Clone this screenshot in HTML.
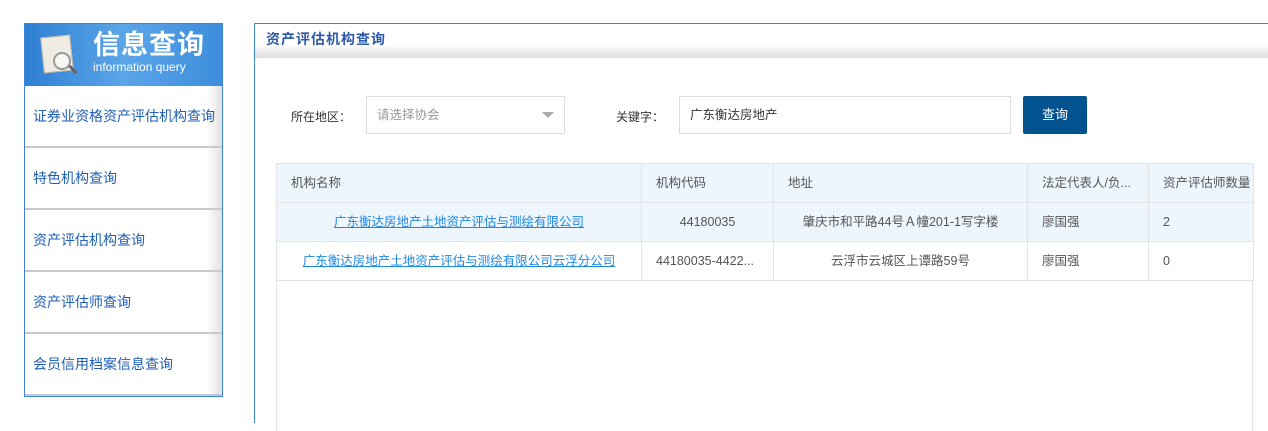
<!DOCTYPE html>
<html><head><meta charset="utf-8"><style>
*{margin:0;padding:0;box-sizing:border-box}
body{width:1268px;height:418px;overflow:hidden;background:#fff;font-family:"Liberation Sans","Noto Sans CJK SC",sans-serif;font-size:13px;position:relative}
.side{position:absolute;left:24px;top:23px;width:199px;height:374px;border:1px solid #3c87d5;}
.hd{height:62px;background:linear-gradient(90deg,#2f7fd3,#5ba5e8 50%,#3d8ddc);position:relative}
.hd .t{position:absolute;left:68px;top:3px;color:#fff;font-size:27px;font-weight:bold;letter-spacing:1px;line-height:36px}
.hd .s{position:absolute;left:68px;top:36px;color:#fff;font-size:12px;line-height:14px}
.ico{position:absolute;left:17px;top:12px;width:30px;height:36px;background:#eeece2;border:1px solid #b9b6a7;transform:rotate(-6deg)}
.mag{position:absolute;left:28px;top:28px;width:18px;height:18px;border:2px solid #999;border-radius:50%;background:rgba(255,255,255,.6)}
.hnd{position:absolute;left:43px;top:44px;width:10px;height:3px;background:#666;transform:rotate(45deg)}
.it{height:62px;border-bottom:2px solid #c8c8d0;color:#1f5fb5;font-size:14px;padding-left:8px;line-height:60px;background:linear-gradient(90deg,#fff 92%,#e2e2e2);white-space:nowrap}
.main{position:absolute;left:254px;top:23px;width:1020px;height:400px;border-left:1px solid #3c87d5;border-top:1px solid #3c87d5}
.ttl{height:34px;background:linear-gradient(#fff 60%,#ddd);color:#2d5aa8;font-weight:bold;font-size:14px;padding:5px 0 0 11px;letter-spacing:1px}
.lbl{position:absolute;top:84px;color:#333;font-size:12px}
.box{position:absolute;top:72px;height:38px;border:1px solid #ddd;background:#fff;font-size:12.5px;line-height:36px;padding-left:10px}
.btn{position:absolute;left:768px;top:72px;width:64px;height:38px;background:#02528f;color:#fff;text-align:center;line-height:38px;border-radius:2px;font-size:13px}
table{position:absolute;left:21px;top:139px;width:977px;table-layout:fixed;border-collapse:collapse;font-size:12.5px;color:#555}
td{border:1px solid #e3e3e3;height:39px;padding:0 14px;white-space:nowrap;overflow:hidden;vertical-align:middle;line-height:37px}
tr.h td,tr.a td{background:#edf5fd}
a{color:#1e88e5;text-decoration:underline}
.emp{position:absolute;left:21px;top:257px;width:977px;height:150px;border-left:1px solid #e3e3e3;border-right:1px solid #e3e3e3}
</style></head><body>
<div class="side">
<div class="hd"><div class="ico"></div><div class="mag"></div><div class="hnd"></div><div class="t">信息查询</div><div class="s">information query</div></div>
<div class="it">证券业资格资产评估机构查询</div>
<div class="it">特色机构查询</div>
<div class="it">资产评估机构查询</div>
<div class="it">资产评估师查询</div>
<div class="it">会员信用档案信息查询</div>
</div>
<div class="main">
<div class="ttl">资产评估机构查询</div>
<div class="lbl" style="left:36px">所在地区：</div>
<div class="box" style="left:111px;width:199px;color:#999">请选择协会<span style="position:absolute;right:10px;top:15px;border:6px solid transparent;border-top:6px solid #aaa;border-bottom:0"></span></div>
<div class="lbl" style="left:361px">关键字：</div>
<div class="box" style="left:424px;width:332px;color:#333">广东衡达房地产</div>
<div class="btn">查询</div>
<table>
<colgroup><col style="width:365px"><col style="width:132px"><col style="width:254px"><col style="width:121px"><col style="width:105px"></colgroup>
<tr class="h"><td>机构名称</td><td>机构代码</td><td>地址</td><td>法定代表人/负...</td><td style="padding-left:14px;padding-right:0">资产评估师数量</td></tr>
<tr class="a"><td style="text-align:center"><a>广东衡达房地产土地资产评估与测绘有限公司</a></td><td style="text-align:center">44180035</td><td style="text-align:center">肇庆市和平路44号Ａ幢201-1写字楼</td><td>廖国强</td><td>2</td></tr>
<tr><td style="text-align:center;padding:0"><a>广东衡达房地产土地资产评估与测绘有限公司云浮分公司</a></td><td>44180035-4422...</td><td style="text-align:center">云浮市云城区上谭路59号</td><td>廖国强</td><td>0</td></tr>
</table>
<div class="emp"></div>
</div>
</body></html>
